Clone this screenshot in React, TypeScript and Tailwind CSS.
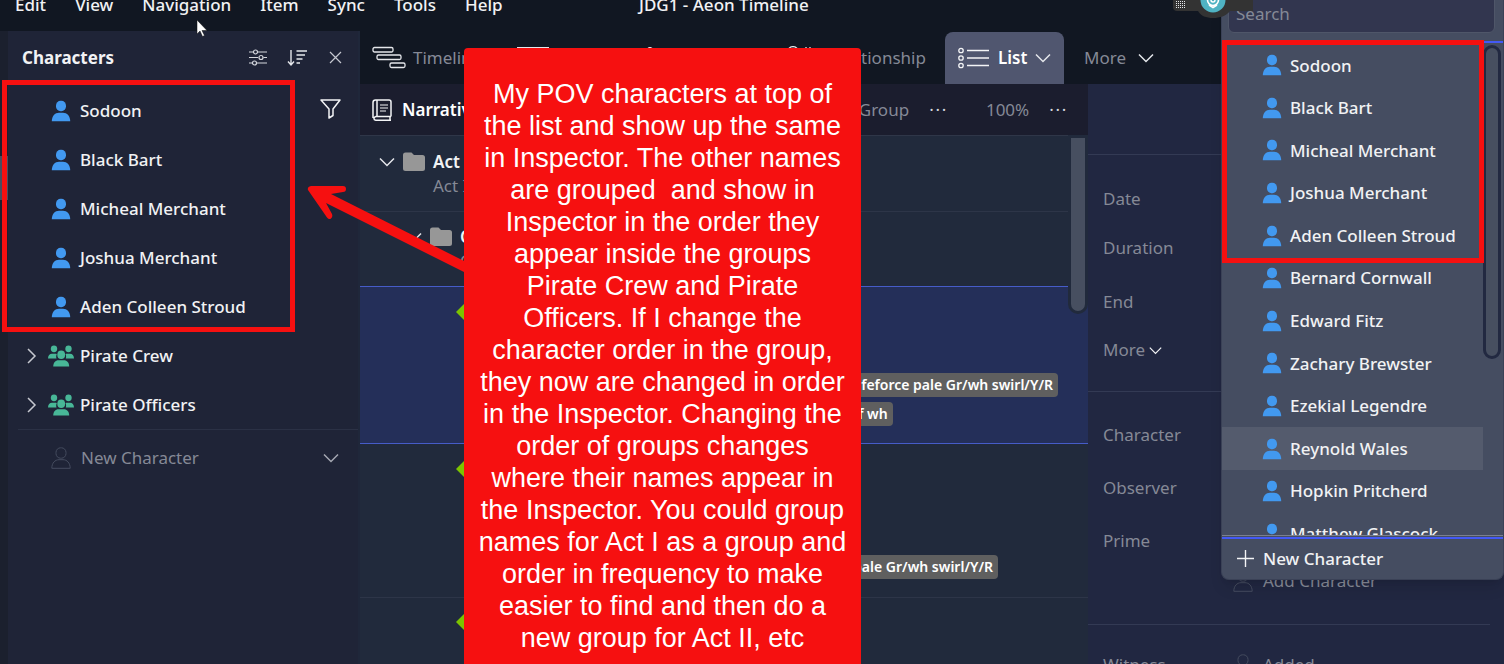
import type { ReactNode } from "react";

const povNames = ["Sodoon", "Black Bart", "Micheal Merchant", "Joshua Merchant", "Aden Colleen Stroud"];
const otherNames = [
  "Bernard Cornwall",
  "Edward Fitz",
  "Zachary Brewster",
  "Ezekial Legendre",
  "Reynold Wales",
  "Hopkin Pritcherd",
  "Matthew Glascock",
];
const groups = ["Pirate Crew", "Pirate Officers"];
const menus = ["Edit", "View", "Navigation", "Item", "Sync", "Tools", "Help"];

const noteLines = [
  "My POV characters at top of",
  "the list and show up the same",
  "in Inspector. The other names",
  "are grouped\u00a0 and show in",
  "Inspector in the order they",
  "appear inside the groups",
  "Pirate Crew and Pirate",
  "Officers. If I change the",
  "character order in the group,",
  "they now are changed in order",
  "in the Inspector. Changing the",
  "order of groups changes",
  "where their names appear in",
  "the Inspector. You could group",
  "names for Act I as a group and",
  "order in frequency to make",
  "easier to find and then do a",
  "new group for Act II, etc",
];

function Person({ outline = false }: { outline?: boolean }) {
  return (
    <svg
      width="20"
      height="22"
      viewBox="0 0 20 22"
      className="shrink-0"
      fill={outline ? "none" : "#4299f0"}
      stroke={outline ? "#454c5f" : "none"}
    >
      <rect x="5" y="0.8" width="10" height="10.4" rx="4.6" />
      <path d="M0.8 21.3C0.8 16 4 12.7 8 12.7h4c4 0 7.2 3.3 7.2 8.6z" />
    </svg>
  );
}

function Group() {
  return (
    <svg width="26" height="22" viewBox="0 0 26 22" className="shrink-0" fill="#48b797">
      <ellipse cx="6" cy="3.8" rx="3.2" ry="3.4" />
      <ellipse cx="20.5" cy="3.8" rx="3.2" ry="3.4" />
      <path d="M0 13.5c0-3 1.7-4.700 4-4.700h3.300c.6 0 1.100.1 1.500.4-.7 1.300-.8 2.800-.3 4.300z" />
      <path d="M26 13.500c0-3-1.700-4.700-4-4.700h-3c-.6 0-1.100.1-1.500.4.7 1.300.8 2.800.3 4.300z" />
      <ellipse cx="13.2" cy="9.8" rx="3.9" ry="4.3" />
      <path d="M5.2 21.5c0-4 2.300-6.300 5.300-6.300h5.400c3 0 5.300 2.300 5.300 6.300z" />
    </svg>
  );
}

function Chevron({ right = false, color = "#e5e7eb", size = 16 }: { right?: boolean; color?: string; size?: number }) {
  return (
    <svg width={size} height={size} viewBox="0 0 16 16" className="shrink-0" fill="none" stroke={color} strokeWidth="1.5">
      {right ? <path d="M4 1l7 7-7 7" /> : <path d="M1 4.5l7 7 7-7" />}
    </svg>
  );
}

function Folder() {
  return (
    <svg width="22" height="20" viewBox="0 0 22 20" className="shrink-0" fill="#979797">
      <path d="M2.5 0.5h6l2.5 2.5h8.500q2.500 0 2.500 2.500v11q0 2.500-2.500 2.500h-17q-2.500 0-2.500-2.500v-13.500q0-2.500 2.500-2.500z" />
    </svg>
  );
}

function Diamond() {
  return (
    <svg width="18" height="18" viewBox="0 0 18 18" fill="#7dc400">
      <path d="M9 0l9 9-9 9-9-9z" />
    </svg>
  );
}

function Tag({ children }: { children: ReactNode }) {
  return (
    <span className="h-6 rounded-[4px] bg-[#5f5f5f] px-[5px] text-[14px] leading-6 font-semibold whitespace-nowrap text-white">
      {children}
    </span>
  );
}

function CharactersPanel() {
  return (
    <aside className="relative w-[360px] shrink-0 border-r-2 border-l-8 border-r-[#1f273a] border-l-[#1b202e] bg-[#1f2437] pt-[2px]">
      <div className="absolute top-[125px] -left-2 h-11 w-2 bg-[#474e60]" />
      <header className="flex h-[50px] items-center gap-5 pr-[13px] pl-[14px]">
        <h2 className="flex-1 text-[17px] font-bold">Characters</h2>
        <button aria-label="Options">
          <svg width="18" height="18" viewBox="0 0 18 18" fill="none" stroke="#d5d7dd" strokeWidth="1.2">
            <path d="M0 3h4M9 3h9M0 8.5h9M14.5 8.5H18M0 14h3M8 14h10" />
            <circle cx="6.5" cy="3" r="2" />
            <circle cx="12" cy="8.5" r="2" />
            <circle cx="5.5" cy="14" r="2" />
          </svg>
        </button>
        <button aria-label="Sort">
          <svg width="20" height="18" viewBox="0 0 20 18" fill="none" stroke="#e5e7eb" strokeWidth="1.4">
            <path d="M4 1v15M1 12.5L4 16l3-3.500M9.500 2H20M9.500 6h8.500M9.500 10h6M9.500 14h3.500" />
          </svg>
        </button>
        <button aria-label="Close">
          <svg width="18" height="18" viewBox="0 0 18 18" fill="none" stroke="#c6c8d0" strokeWidth="1.2">
            <path d="M3 3l11 11M14 3L3 14" />
          </svg>
        </button>
      </header>
      <ul className="pt-[3px] text-[17px] font-medium">
        {povNames.map((name, i) => (
          <li key={name} className="flex h-[49px] items-center gap-[9px] pr-[17px] pl-[43px]">
            <Person />
            <span className="flex-1">{name}</span>
            {i === 0 && (
              <button aria-label="Filter" className="mb-1">
                <svg width="21" height="20" viewBox="0 0 21 20" fill="none" stroke="#f3f4f6" strokeWidth="1.5">
                  <path d="M1 1h19l-7 9v6.500l-4 2.500v-9z" strokeLinejoin="round" />
                </svg>
              </button>
            )}
          </li>
        ))}
        {groups.map((name) => (
          <li key={name} className="flex h-[49px] items-center pl-4">
            <button aria-label={"Expand " + name} className="mr-2">
              <Chevron right color="#c6c8d0" />
            </button>
            <Group />
            <span className="ml-[6px]">{name}</span>
          </li>
        ))}
      </ul>
      <div className="ml-[10px] flex h-14 items-center gap-[10px] border-t border-[#2b3145] pr-[19px] pl-[33px] text-[17px] text-[#858996]">
        <Person outline />
        <span className="flex-1">New Character</span>
        <Chevron color="#a5a8b2" />
      </div>
    </aside>
  );
}

function ViewTabs() {
  return (
    <nav className="flex h-[53px] items-end bg-[#111722] pl-3 text-[17px] text-[#858996]">
      <button className="flex h-[52px] w-[145px] items-center gap-[7px]">
        <svg width="34" height="24" viewBox="0 0 34 24" fill="none" stroke="#e5e7eb" strokeWidth="1.3">
          <rect x="1" y="1.5" width="20" height="4.5" rx="1.5" />
          <rect x="5" y="9" width="24" height="4.5" rx="1.5" />
          <rect x="18" y="17" width="15" height="4.5" rx="1.5" />
        </svg>
        Timeline
      </button>
      <button aria-label="Spreadsheet" className="flex h-[52px] w-[124px] items-center">
        <svg width="32" height="22" viewBox="0 0 32 22" fill="none" stroke="#e5e7eb" strokeWidth="1.3">
          <rect x="0.6" y="0.6" width="31" height="20.8" />
        </svg>
      </button>
      <button aria-label="Mindmap" className="flex h-[52px] w-[142px] items-center">
        <svg width="22" height="22" viewBox="0 0 22 22" fill="none" stroke="#e5e7eb" strokeWidth="1.3">
          <circle cx="9" cy="3" r="2.4" />
          <path d="M9 5.5V12M3 20l6-8 8 8" />
        </svg>
      </button>
      <button className="flex h-[52px] w-[162px] items-center gap-[10px]">
        <svg width="34" height="24" viewBox="0 0 34 24" fill="none" stroke="#e5e7eb" strokeWidth="1.3">
          <circle cx="10" cy="6" r="5.4" />
          <path d="M23 1v22M27 1v22" strokeDasharray="1 2" />
        </svg>
        Relationship
      </button>
      <button className="flex h-[52px] w-[119px] items-center rounded-t-lg bg-[#50566f] pl-[12px] font-semibold text-white">
        <svg width="32" height="22" viewBox="0 0 32 22" fill="none" stroke="#f3f4f6" strokeWidth="1.3">
          <circle cx="4" cy="3.5" r="2.2" />
          <circle cx="4" cy="11" r="2.2" />
          <circle cx="4" cy="18.5" r="2.2" />
          <path d="M10 3.5h22M10 11h22M10 18.5h22" />
        </svg>
        <span className="mr-2 ml-[9px]">List</span>
        <Chevron />
      </button>
      <button className="ml-5 flex h-[52px] items-center gap-3">
        More
        <Chevron />
      </button>
    </nav>
  );
}

function ListView() {
  return (
    <main className="relative flex min-w-0 flex-1 flex-col bg-[#212a3c]">
      <div className="flex h-[52px] shrink-0 items-center border-b border-[#2f3648] bg-[#1b1d2e] pr-[20px] pl-3 text-[17px] text-[#858996]">
        <svg width="20" height="22" viewBox="0 0 20 22" fill="none" stroke="#f3f4f6" strokeWidth="1.5">
          <path d="M19 17.5H4a3 2 0 0 0 0 3.800h15M18 17.500v3.800M1 19V3.500Q1 1 3.500 1H17q2 0 2 2v14.500M5 1v16" />
          <path d="M8 6h8M8 9h8M8 12h6" strokeWidth="1.2" />
        </svg>
        <span className="ml-[10px] flex-1 font-semibold text-white">Narrative</span>
        <span>Group</span>
        <button aria-label="Group options" className="ml-5 tracking-widest text-[#d5d7dd]">···</button>
        <span className="ml-[38px]">100%</span>
        <button aria-label="Zoom options" className="ml-5 tracking-widest text-[#d5d7dd]">···</button>
      </div>
      <div className="flex h-[76px] shrink-0 items-start gap-2 border-b border-[#2d3548] pt-[14px] pl-[19px] text-[17px] leading-6">
        <button aria-label="Collapse Act" className="mt-1"><Chevron /></button>
        <span className="mt-[2px]"><Folder /></span>
        <div>
          <p className="font-semibold">Act I</p>
          <p className="text-[#858996]">Act I</p>
        </div>
      </div>
      <div className="flex h-[74px] shrink-0 items-start gap-2 pt-[13px] pl-[46px] text-[17px] leading-6">
        <button aria-label="Collapse chapter" className="mt-1"><Chevron /></button>
        <span className="mt-[2px]"><Folder /></span>
        <div>
          <p className="font-semibold">Ch</p>
          <p className="text-[#858996]">Ch</p>
        </div>
      </div>
      <div className="flex h-[158px] shrink-0 justify-between border-y border-[#465cc8] bg-[#242f59] pr-[30px] pl-24">
        <span className="mt-[16px]"><Diamond /></span>
        <div className="mt-[86px] flex flex-col items-start gap-[5px]">
          <Tag>Lifeforce pale Gr/wh swirl/Y/R</Tag>
          <Tag>of wh</Tag>
        </div>
      </div>
      <div className="flex h-[154px] shrink-0 justify-between border-b border-[#2d3548] pr-[90px] pl-24">
        <span className="mt-[16px]"><Diamond /></span>
        <div className="mt-[111px] flex"><Tag>pale Gr/wh swirl/Y/R</Tag></div>
      </div>
      <div className="pt-[15px] pl-24"><Diamond /></div>
      <div className="absolute top-[51px] right-0 h-[179px] w-5 rounded-b-xl border-3 border-t-3 border-[#212a3c] bg-[#474f60]" />
    </main>
  );
}

function Inspector() {
  return (
    <section className="w-[416px] shrink-0 bg-[#212741] pr-[14px] text-[17px] text-[#858996]">
      <div className="h-[71px] border-b border-[#333a54]" />
      <dl className="h-[237px] border-b border-[#333a54] pt-[19px] pl-[15px]">
        <dt className="h-[49px] leading-[49px]">Date</dt>
        <dt className="h-[54px] leading-[49px]">Duration</dt>
        <dt className="h-[49px] leading-[49px]">End</dt>
        <dt className="flex h-12 items-center gap-1">More <Chevron size={13} color="#f3f4f6" /></dt>
      </dl>
      <dl className="h-[233px] border-b border-[#333a54] pt-[16px] pl-[15px]">
        <dt className="h-[53px] leading-[53px]">Character</dt>
        <dt className="h-[53px] leading-[53px]">Observer</dt>
        <dt className="h-[53px] leading-[53px]">Prime</dt>
        <dd className="-mt-[9px] ml-[130px] flex h-[46px] items-center gap-[10px]"><Person outline />Add Character</dd>
      </dl>
      <div className="flex h-20 items-center pl-[15px]">
        <span className="w-[130px]">Witness</span>
        <Person outline />
        <span className="ml-[10px]">Added</span>
      </div>
    </section>
  );
}

function CharacterMenu() {
  return (
    <div className="absolute top-0 right-0 flex h-[580px] w-[283px] flex-col overflow-hidden rounded-b-lg border border-t-0 border-[#3a4156] bg-[#454d61] text-[17px] font-medium shadow-lg">
      <input
        aria-label="Search"
        placeholder="Search"
        className="mr-2 ml-[6px] -mt-[6px] h-[39px] shrink-0 rounded-md border border-[#4f5669] bg-[#32364f] px-[7px] font-normal placeholder:text-[#858996]"
      />
      <div className="relative mt-2 min-h-0 flex-1 overflow-hidden border-t-2 border-[#4359f5] pt-[1px]">
        <ul className="grid h-[511px] auto-rows-fr pr-[20px]">
          {[...povNames, ...otherNames].map((name) => (
            <li
              key={name}
              className={"flex items-center gap-2 pl-10 " + (name === "Reynold Wales" ? "bg-[#545b6d]" : "")}
            >
              <Person />
              {name}
            </li>
          ))}
        </ul>
        <div className="absolute top-[2px] right-[2px] h-[314px] w-[18px] rounded-full border-[3px] border-[#222941] bg-[#474f60]" />
      </div>
      <button className="flex h-[44px] shrink-0 flex-col border-t border-[#7a8090] pt-[1px]">
        <span className="flex w-full flex-1 items-center gap-2 border-t-2 border-[#4359f5] pb-[1px] pl-[14px]">
          <svg width="19" height="19" viewBox="0 0 19 19" fill="none" stroke="#f3f4f6" strokeWidth="1.4">
            <path d="M9.5 1v17M1 9.5h17" />
          </svg>
          New Character
        </span>
      </button>
    </div>
  );
}

export default function App() {
  return (
    <div className="relative flex h-screen flex-col overflow-hidden bg-[#111722] font-['Noto_Sans','Open_Sans',sans-serif] text-[#f1f2f4]">
      <div className="flex h-[31px] shrink-0 items-start bg-[#111722] pl-[15px] text-[17px] leading-6 font-medium">
        <div className="-mt-[7px] flex w-[624px] gap-[29px]">
          {menus.map((m) => (
            <button key={m}>{m}</button>
          ))}
        </div>
        <p className="-mt-[7px]">JDG1 - Aeon Timeline</p>
      </div>
      <div className="flex min-h-0 flex-1">
        <CharactersPanel />
        <div className="flex min-w-0 flex-1 flex-col">
          <ViewTabs />
          <div className="flex min-h-0 flex-1">
            <ListView />
            <Inspector />
          </div>
        </div>
      </div>
      <CharacterMenu />

      {/* recorder toolbar */}
      <svg className="absolute top-0 left-[1173px]" width="82" height="18" viewBox="0 0 82 18">
        <path d="M0 0h80v11H57C53 16 47 18 40 18S28 16 25 11H4q-3 0-4-3z" fill="#333333" />
        <circle cx="40" cy="0" r="12.5" fill="#4fb3c3" />
        <circle cx="40" cy="0" r="5.5" fill="none" stroke="#ffffff" strokeWidth="1.6" />
        <circle cx="40" cy="0" r="2" fill="none" stroke="#ffffff" strokeWidth="1.4" />
        <path d="M36 5l4 2.500 4-2.500" fill="none" stroke="#ffffff" strokeWidth="1.6" />
        <path d="M3 1.500h9M3 3.500h9M3 5.500h9M3 7.500h9" stroke="#e5e7eb" strokeDasharray="1 1" />
      </svg>

      {/* annotations */}
      <div className="absolute top-20 left-[2px] h-[252px] w-[293px] border-[5px] border-[#f61010]" />
      <div className="absolute top-10 left-[1222px] h-[223px] w-[262px] border-[5px] border-[#f61010]" />
      <svg className="absolute top-[180px] left-[300px]" width="180" height="100" viewBox="0 0 180 100">
        <path
          d="M11 6h32q3 0 3 3t-3 3L31 14L172 85v11L26 23L32 34q1 3-1 4.500t-4-1L8 10q-1-3 3-4z"
          fill="#f61010"
        />
      </svg>
      <div className="absolute top-12 bottom-0 left-[464px] w-[397px] rounded-t-[4px] bg-[#f61010] pt-[30px] text-center font-['Liberation_Sans',Arial,sans-serif] text-[27px] leading-8 whitespace-nowrap text-white">
        {noteLines.map((line) => (
          <p key={line}>{line}</p>
        ))}
      </div>
      <svg className="absolute top-5 left-[196px]" width="12" height="17" viewBox="0 0 12 17">
        <path d="M1 0v14l3-3 2.500 5.500 2-1-2.500-5h5z" fill="#ffffff" stroke="#111111" strokeWidth="0.5" />
      </svg>
    </div>
  );
}
